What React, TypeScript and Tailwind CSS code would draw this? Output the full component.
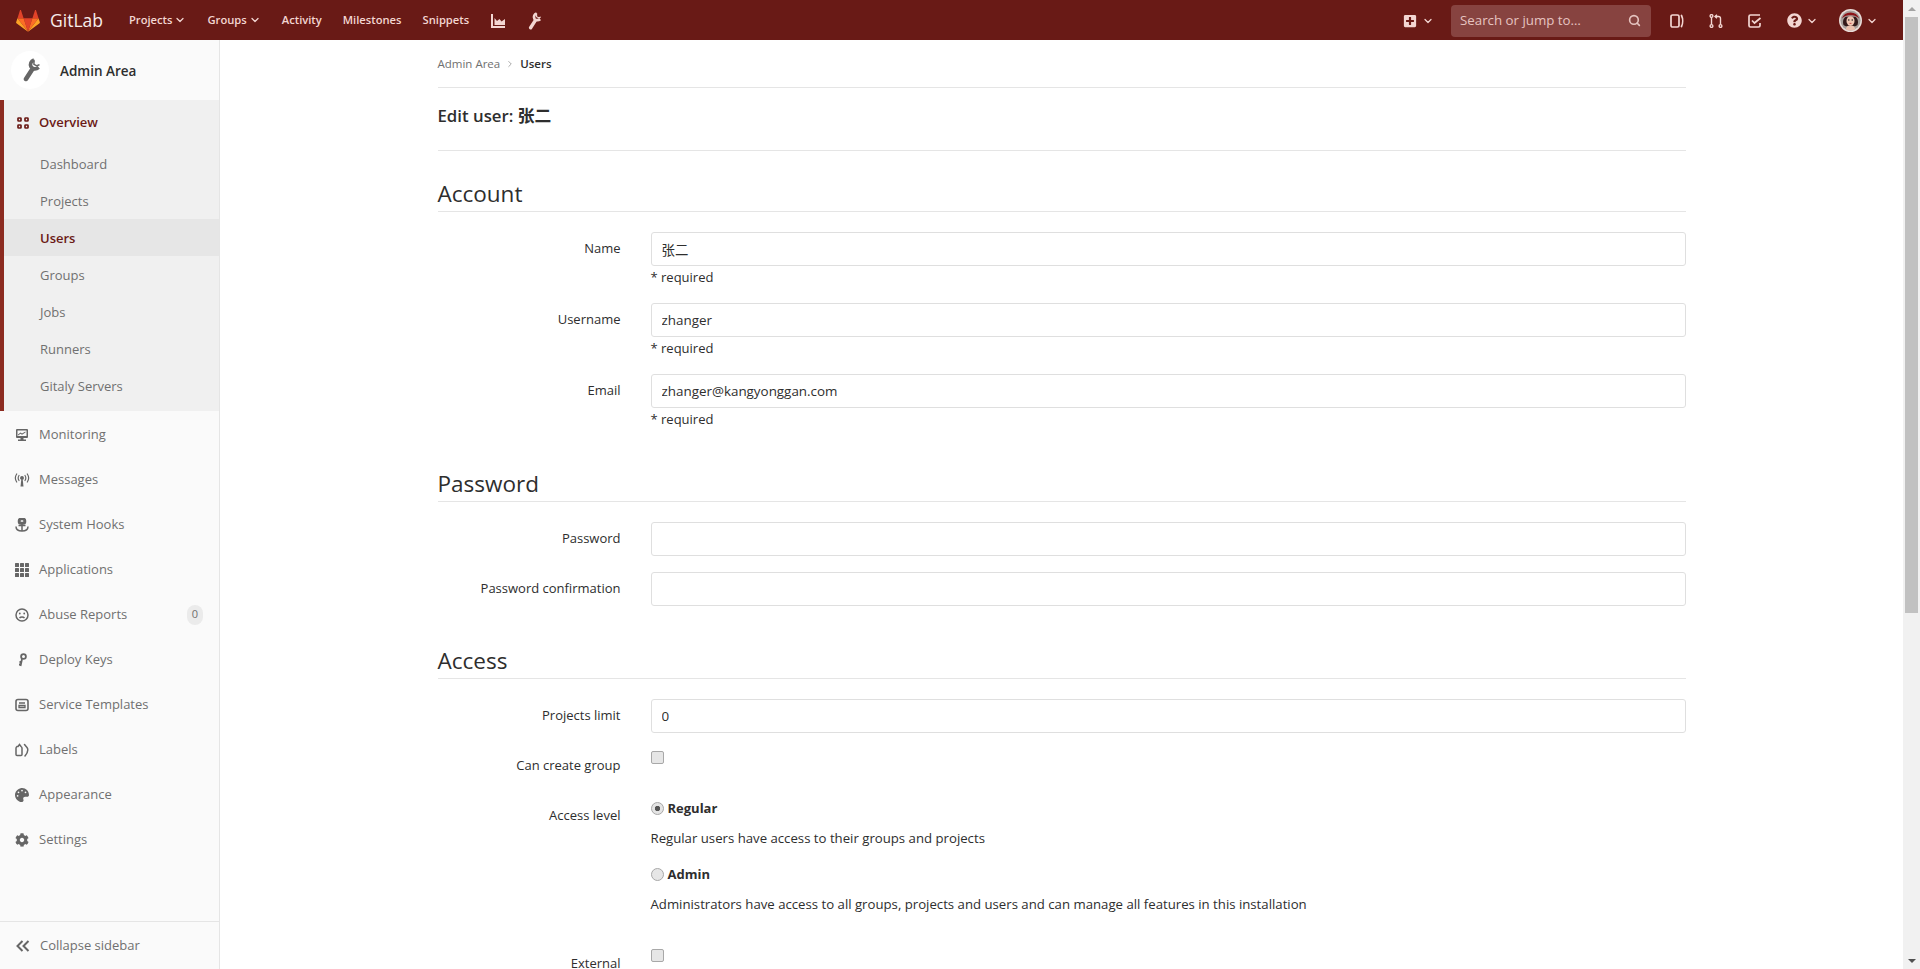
import { type ReactNode } from 'react'
import { ChevronDown, ChevronRight, Search } from 'lucide-react'
import { FaCog, FaPalette, FaQuestionCircle, FaPlusSquare } from 'react-icons/fa'

function Tanuki({ className }: { className?: string }) {
  return (
    <svg viewBox="0 0 36 33" className={className}>
      <path d="M18 32.5 24.6 12.3H11.4z" fill="#e24329" />
      <path d="M18 32.5 11.4 12.3H2.2z" fill="#fc6d26" />
      <path d="M2.2 12.3.2 18.5c-.2.6 0 1.2.5 1.5L18 32.5z" fill="#fca326" />
      <path d="M2.2 12.3h9.2L7.4 0c-.2-.6-1.1-.6-1.3 0z" fill="#e24329" />
      <path d="M18 32.5 24.6 12.3h9.2z" fill="#fc6d26" />
      <path d="m33.8 12.3 2 6.2c.2.6 0 1.2-.5 1.5L18 32.5z" fill="#fca326" />
      <path d="M33.8 12.3h-9.2L28.6 0c.2-.6 1.1-.6 1.3 0z" fill="#e24329" />
    </svg>
  )
}

// GitLab's wrench leans steeply, so the react-icons one looks too flat here
function WrenchIcon({ className }: { className?: string }) {
  return (
    <svg viewBox="0 0 14 16" className={className} fill="none" stroke="currentColor" strokeLinecap="round">
      <path d="M8.200 7.500 4 14" strokeWidth="3" />
      <path d="M9.300 1.300C7.300 2 6.500 4 7.300 5.800c.9 1.700 3.300 2 5.200.500" strokeWidth="2.400" strokeLinecap="butt" />
      <path d="M9.300 1.200v3l2 1 1.700-.8" strokeWidth="1" strokeLinecap="butt" />
    </svg>
  )
}

function Avatar() {
  return (
    <svg viewBox="0 0 24 24" className="h-[23px] w-[23px]">
      <circle cx="12" cy="12" r="12" fill="#e9dcd8" />
      <circle cx="12" cy="12" r="10.500" fill="#a8a09c" />
      <path d="M3 10a9.500 9.500 0 0 1 18 0c-2-2-4-3.500-9-3.500S5 8 3 10z" fill="#8c1418" />
      <path d="M5 17c-1.500-3-1-7 2-9h10c3 2 3.500 6 2 9l-2 1H7z" fill="#33191a" />
      <ellipse cx="12" cy="12.500" rx="4.200" ry="5" fill="#efc6b3" />
      <path d="M7 21c.8-3 2.800-4 5-4s4.200 1 5 4a10.500 10.500 0 0 1-10 0z" fill="#eac0ae" />
      <circle cx="10.200" cy="11.500" r=".8" fill="#222" />
      <circle cx="13.800" cy="11.500" r=".8" fill="#222" />
      <path d="M11 15h2" stroke="#c23c3e" strokeWidth=".9" />
    </svg>
  )
}

function IssuesIcon() {
  return (
    <svg viewBox="0 0 14 14" className="h-[14px] w-[14px]" fill="none" stroke="currentColor" strokeWidth="1.7">
      <rect x="1" y="1" width="8" height="12" rx="1.6" />
      <path d="M11.500 1.500c1.500 3 1.500 8 0 11" strokeLinecap="round" />
    </svg>
  )
}

function MrIcon() {
  return (
    <svg viewBox="0 0 14 14" className="h-[14px] w-[14px]" fill="none" stroke="currentColor" strokeWidth="1.4">
      <circle cx="2.500" cy="2" r="1.400" />
      <circle cx="2.500" cy="12" r="1.400" />
      <circle cx="11.500" cy="12" r="1.400" />
      <path d="M2.500 3.500v7M11.500 10.500V4.500a2 2 0 0 0-2-2H6.500" />
      <path d="M8 .7 6 2.500 8 4.300" />
    </svg>
  )
}

function TodoIcon() {
  return (
    <svg viewBox="0 0 14 14" className="h-[14px] w-[14px]" fill="none" stroke="currentColor" strokeWidth="1.7">
      <path d="M12 1H2.500A1.500 1.500 0 0 0 1 2.500v9A1.500 1.500 0 0 0 2.500 13h8a1.500 1.500 0 0 0 1.500-1.500V9" />
      <path d="m4 6.500 2.500 2.500L12.500 4" />
    </svg>
  )
}

function ChartIcon() {
  return (
    <svg viewBox="0 0 14 14" className="h-[14px] w-[14px]" fill="currentColor">
      <path d="M0 0h2v12h12v2H0z" />
      <path d="M3.500 11V4l2.500 3 2.500-2 2 2.500L14 5v6z" />
    </svg>
  )
}

function OverviewIcon() {
  return (
    <svg viewBox="0 0 12 12" className="h-[12px] w-[12px]" fill="none" stroke="#6b1a16" strokeWidth="1.700">
      <rect x="1" y="1" width="3" height="3" rx=".6" />
      <rect x="8" y="1" width="3" height="3" rx=".6" />
      <rect x="1" y="8" width="3" height="3" rx=".6" />
      <rect x="8" y="8" width="3" height="3" rx=".6" />
    </svg>
  )
}

const iconClass = 'h-[14px] w-[14px] text-[#666]'

function MonitorIcon() {
  return (
    <svg viewBox="0 0 14 14" className={iconClass} fill="currentColor">
      <path fillRule="evenodd" d="M2 1h10a1 1 0 0 1 1 1v7a1 1 0 0 1-1 1H2a1 1 0 0 1-1-1V2a1 1 0 0 1 1-1zm.5 1.500v5.500h9V2.500z" />
      <path d="M3 6.500 5.500 4.500l1.500 1L10.500 3.500v1L7 6.700l-1.500-1L3 7.500z" />
      <path d="M5.500 10h3v1.500h2.500V13H3v-1.500h2.500z" />
    </svg>
  )
}

function BroadcastIcon() {
  return (
    <svg viewBox="0 0 16 14" className="h-[14px] w-[16px] text-[#666]" fill="none" stroke="currentColor" strokeWidth="1.200">
      <circle cx="8" cy="5" r="1.300" fill="currentColor" />
      <path d="M7.300 6.500h1.400l.8 7h-3z" fill="currentColor" stroke="none" />
      <path d="M5 2.500c-1 1.500-1 3.500 0 5M11 2.500c1 1.500 1 3.500 0 5M2.700 1C1 3.500 1 6.500 2.700 9M13.300 1c1.700 2.500 1.700 5.500 0 8" strokeLinecap="round" />
    </svg>
  )
}

function HookIcon() {
  return (
    <svg viewBox="0 0 14 14" className={iconClass} fill="none" stroke="currentColor" strokeWidth="1.500">
      <rect x="3.500" y="0.500" width="7" height="5.500" rx="2.200" fill="currentColor" />
      <rect x="5.700" y="2.200" width="2.600" height="1.600" rx=".6" fill="#fafafa" stroke="none" />
      <path d="M7 6v7M3.500 7.500h7" />
      <path d="M1 8.500c0 3 2.500 4.500 6 4.500s6-1.500 6-4.500" />
    </svg>
  )
}

function AppsIcon() {
  return (
    <svg viewBox="0 0 14 14" className={iconClass} fill="currentColor">
      {[0, 5, 10].map((y) =>
        [0, 5, 10].map((x) => <rect key={`${x}-${y}`} x={x} y={y} width="4" height="4" rx=".5" />),
      )}
    </svg>
  )
}

function AbuseIcon() {
  return (
    <svg viewBox="0 0 14 14" className={iconClass} fill="none" stroke="currentColor" strokeWidth="1.500">
      <circle cx="7" cy="7" r="6" />
      <circle cx="4.800" cy="5.500" r=".9" fill="currentColor" stroke="none" />
      <circle cx="9.200" cy="5.500" r=".9" fill="currentColor" stroke="none" />
      <path d="M4.500 10c1.300-1.500 3.700-1.500 5 0" />
    </svg>
  )
}

function KeyIcon() {
  return (
    <svg viewBox="0 0 14 14" className={iconClass} fill="none" stroke="currentColor" strokeWidth="1.800">
      <circle cx="8.500" cy="3.500" r="2.400" />
      <path d="M7 6 5.500 13M6.500 9H4.500M5.800 11.500H4" />
    </svg>
  )
}

function TemplateIcon() {
  return (
    <svg viewBox="0 0 14 14" className={iconClass} fill="none" stroke="currentColor" strokeWidth="1.600">
      <rect x="1" y="1.500" width="12" height="11" rx="2" />
      <path d="M4 5h6M4 7.500h6v2H4z" strokeWidth="1.300" />
    </svg>
  )
}

function LabelsIcon() {
  return (
    <svg viewBox="0 0 14 14" className={iconClass} fill="none" stroke="currentColor" strokeWidth="1.500">
      <path d="M3 3.500 4.500 1.500 6 3.500c.6.500 1 1 1 1.800v6.200a1 1 0 0 1-1 1H2a1 1 0 0 1-1-1V5.300c0-.8.4-1.300 1-1.800z" />
      <path d="M9.500 1.500 12 4.500c.8 1 .8 1.500.8 2.500 0 2-.8 3.500-2.800 6" strokeLinecap="round" />
    </svg>
  )
}

const overviewItems = ['Dashboard', 'Projects', 'Users', 'Groups', 'Jobs', 'Runners', 'Gitaly Servers']

const sideItems: { label: string; icon: ReactNode; badge?: string }[] = [
  { label: 'Monitoring', icon: <MonitorIcon /> },
  { label: 'Messages', icon: <BroadcastIcon /> },
  { label: 'System Hooks', icon: <HookIcon /> },
  { label: 'Applications', icon: <AppsIcon /> },
  { label: 'Abuse Reports', icon: <AbuseIcon />, badge: '0' },
  { label: 'Deploy Keys', icon: <KeyIcon /> },
  { label: 'Service Templates', icon: <TemplateIcon /> },
  { label: 'Labels', icon: <LabelsIcon /> },
  { label: 'Appearance', icon: <FaPalette className={iconClass} /> },
  { label: 'Settings', icon: <FaCog className={iconClass} /> },
]

function Navbar() {
  return (
    <header className="flex h-10 shrink-0 items-center bg-[#691a16] pt-px pr-[25px] pl-4 text-[11.200px] font-semibold text-[#f3d6d2]">
      <Tanuki className="h-[22px] w-6" />
      <span className="ml-[10px] text-[17.500px] font-normal text-[#f7ecea]">GitLab</span>
      <span className="ml-[26px] flex items-center gap-[2px]">
        Projects <ChevronDown size={12} strokeWidth={2.5} />
      </span>
      <span className="ml-[21px] flex items-center gap-[2px]">
        Groups <ChevronDown size={12} strokeWidth={2.5} />
      </span>
      <span className="ml-[21px]">Activity</span>
      <span className="ml-[21px]">Milestones</span>
      <span className="ml-[21px]">Snippets</span>
      <span className="ml-[22px]">
        <ChartIcon />
      </span>
      <span className="ml-[21px]">
        <WrenchIcon className="h-[18px] w-[16px]" />
      </span>

      <div className="ml-auto flex items-center">
        <FaPlusSquare className="h-[14px] w-[14px]" />
        <ChevronDown size={12} strokeWidth={2.5} className="ml-[5px]" />
        <div className="ml-[17px] flex h-8 w-[200px] items-center justify-between rounded-[4px] bg-[#874340] pr-[10px] pl-[9px] text-[13.300px] font-normal text-[#e6c4c0]">
          Search or jump to…
          <Search size={13} strokeWidth={3} />
        </div>
        <span className="ml-[19px]">
          <IssuesIcon />
        </span>
        <span className="ml-[25px]">
          <MrIcon />
        </span>
        <span className="ml-[25px]">
          <TodoIcon />
        </span>
        <FaQuestionCircle className="ml-[25px] h-[15px] w-[15px]" />
        <ChevronDown size={12} strokeWidth={2.5} className="ml-[4px]" />
        <span className="ml-[21px]">
          <Avatar />
        </span>
        <ChevronDown size={12} strokeWidth={2.5} className="ml-[4px]" />
      </div>
    </header>
  )
}

function Sidebar() {
  return (
    <aside className="flex w-[220px] shrink-0 flex-col border-r border-[#e5e5e5] bg-[#fafafa] text-[13px] text-[#707070]">
      <div className="flex h-[60px] items-center pl-[11px]">
        <span className="flex h-[38px] w-[38px] items-center justify-center rounded-full bg-white">
          <WrenchIcon className="h-[24px] w-[21px] text-[#666]" />
        </span>
        <span className="ml-[11px] pt-[2px] text-[13.500px] font-semibold text-[#2e2e2e]">Admin Area</span>
      </div>
      <div className="border-l-4 border-[#8c2b20] bg-[#f0f0f0] pb-[7px]">
        <div className="flex h-[45px] items-center pt-px pl-[13px] font-semibold text-[#6b1a16]">
          <OverviewIcon />
          <span className="ml-[10px]">Overview</span>
        </div>
        {overviewItems.map((item) => (
          <div
            key={item}
            className={
              item === 'Users'
                ? 'flex h-[37px] items-center bg-[#e6e6e6] pt-[2px] pl-9 font-semibold text-[#6b1a16]'
                : 'flex h-[37px] items-center pt-[2px] pl-9'
            }
          >
            {item}
          </div>
        ))}
      </div>
      <div className="mt-px">
        {sideItems.map((item) => (
          <div key={item.label} className="flex h-[45px] items-center pr-4">
            <span className="flex w-[46px] justify-center pr-[2px]">{item.icon}</span>
            <span className="-ml-[7px]">{item.label}</span>
            {item.badge && (
              <span className="ml-auto flex h-5 w-4 items-center justify-center rounded-full bg-[#ebebeb] text-[11px]">
                {item.badge}
              </span>
            )}
          </div>
        ))}
      </div>
      <div className="mt-auto flex h-12 items-center border-t border-[#e5e5e5] pl-[16px]">
        <svg viewBox="0 0 14 12" className="h-3 w-[14px] text-[#666]" fill="none" stroke="currentColor" strokeWidth="2">
          <path d="M6.500 1 1.500 6l5 5M12.500 1l-5 5 5 5" />
        </svg>
        <span className="ml-[10px]">Collapse sidebar</span>
      </div>
    </aside>
  )
}

function SectionTitle({ children, className = '' }: { children: ReactNode; className?: string }) {
  return (
    <div className={`flex h-[61px] items-end border-b border-[#e5e5e5] pb-px ${className}`}>
      <h3 className="text-[22.500px] leading-8 font-normal text-[#2e2e2e]">{children}</h3>
    </div>
  )
}

function Field({ label, children, className = '' }: { label: string; children: ReactNode; className?: string }) {
  return (
    <div className={`flex ${className}`}>
      <label className="flex h-[34px] w-[183px] shrink-0 items-center justify-end text-[#2e2e2e]">{label}</label>
      <div className="ml-[30px] min-w-0 flex-1">{children}</div>
    </div>
  )
}

function TextInput({ value }: { value?: string }) {
  return (
    <input
      defaultValue={value}
      className="block h-[34px] w-full rounded-[3px] border border-[#dfdfdf] bg-white px-[10px] text-[13.400px] text-[#2e2e2e] outline-none"
    />
  )
}

function Required() {
  return <div className="mt-px mb-px h-5 leading-5 text-[#2e2e2e]">* required</div>
}

const checkClass = 'block h-[13px] w-[13px] appearance-none rounded-[2px] border border-[#a8a8a8] bg-[#e6e6e6]'
const radioClass =
  '-mt-[2px] block h-[13px] w-[13px] appearance-none rounded-full border border-[#a8a8a8] bg-[#e6e6e6] checked:bg-[radial-gradient(circle,#555_0,#555_32%,#e4e4e4_38%)]'

function UserForm() {
  return (
    <form className="text-[13px]">
      <SectionTitle>Account</SectionTitle>
      <Field label="Name" className="mt-5 mb-[15px]">
        <TextInput value="张二" />
        <Required />
      </Field>
      <Field label="Username" className="mb-[15px]">
        <TextInput value="zhanger" />
        <Required />
      </Field>
      <Field label="Email">
        <TextInput value="zhanger@kangyonggan.com" />
        <Required />
      </Field>

      <SectionTitle className="mt-[11px]">Password</SectionTitle>
      <Field label="Password" className="mt-5 mb-4">
        <TextInput />
      </Field>
      <Field label="Password confirmation">
        <TextInput />
      </Field>

      <SectionTitle className="mt-3">Access</SectionTitle>
      <Field label="Projects limit" className="mt-5 mb-4">
        <TextInput value="0" />
      </Field>
      <Field label="Can create group" className="mb-4">
        <input type="checkbox" className={`mt-[2px] ${checkClass}`} />
      </Field>
      <Field label="Access level" className="mb-[33px]">
        <div className="flex h-5 items-center">
          <input type="radio" name="level" defaultChecked className={radioClass} />
          <span className="ml-[4px] font-bold text-[#2e2e2e]">Regular</span>
        </div>
        <p className="mt-[9px] h-5 text-[13.200px] leading-5 text-[#2e2e2e]">
          Regular users have access to their groups and projects
        </p>
        <div className="mt-[17px] flex h-5 items-center">
          <input type="radio" name="level" className={radioClass} />
          <span className="ml-[4px] font-bold text-[#2e2e2e]">Admin</span>
        </div>
        <p className="mt-[9px] h-5 text-[13.200px] leading-5 text-[#2e2e2e]">
          Administrators have access to all groups, projects and users and can manage all features in this installation
        </p>
      </Field>
      <Field label="External">
        <input type="checkbox" className={`mt-[2px] ${checkClass}`} />
      </Field>
    </form>
  )
}

function Scrollbar() {
  return (
    <div className="flex h-screen w-[17px] shrink-0 flex-col bg-[#f1f1f1]">
      <div className="flex h-[17px] items-center justify-center">
        <div className="h-0 w-0 border-x-[4px] border-b-[4px] border-x-transparent border-b-[#a3a3a3]" />
      </div>
      <div className="mx-[2px] h-[596px] bg-[#c1c1c1]" />
      <div className="mt-auto flex h-[17px] items-center justify-center">
        <div className="h-0 w-0 border-x-[4px] border-t-[4px] border-x-transparent border-t-[#505050]" />
      </div>
    </div>
  )
}

export default function App() {
  return (
    <div className="flex h-screen overflow-hidden bg-white font-['Open_Sans','Noto_Sans_CJK_SC',sans-serif]">
      <div className="flex min-w-0 flex-1 flex-col">
        <Navbar />
        <div className="flex min-h-0 flex-1">
          <Sidebar />
          <main className="min-w-0 flex-1 overflow-hidden">
            <div className="mx-auto max-w-[1280px] px-4">
              <div className="flex h-[48px] items-center border-b border-[#e5e5e5] text-[11.500px]">
                <span className="text-[#707070]">Admin Area</span>
                <ChevronRight size={10} className="mx-[5px] text-[#999]" />
                <span className="font-semibold text-[#2e2e2e]">Users</span>
              </div>
              <div className="h-[63px] border-b border-[#e5e5e5] pt-[17px]">
                <h2 className="text-[16.800px] leading-[22px] font-semibold text-[#2e2e2e]">Edit user: 张二</h2>
              </div>
              <UserForm />
            </div>
          </main>
        </div>
      </div>
      <Scrollbar />
    </div>
  )
}
